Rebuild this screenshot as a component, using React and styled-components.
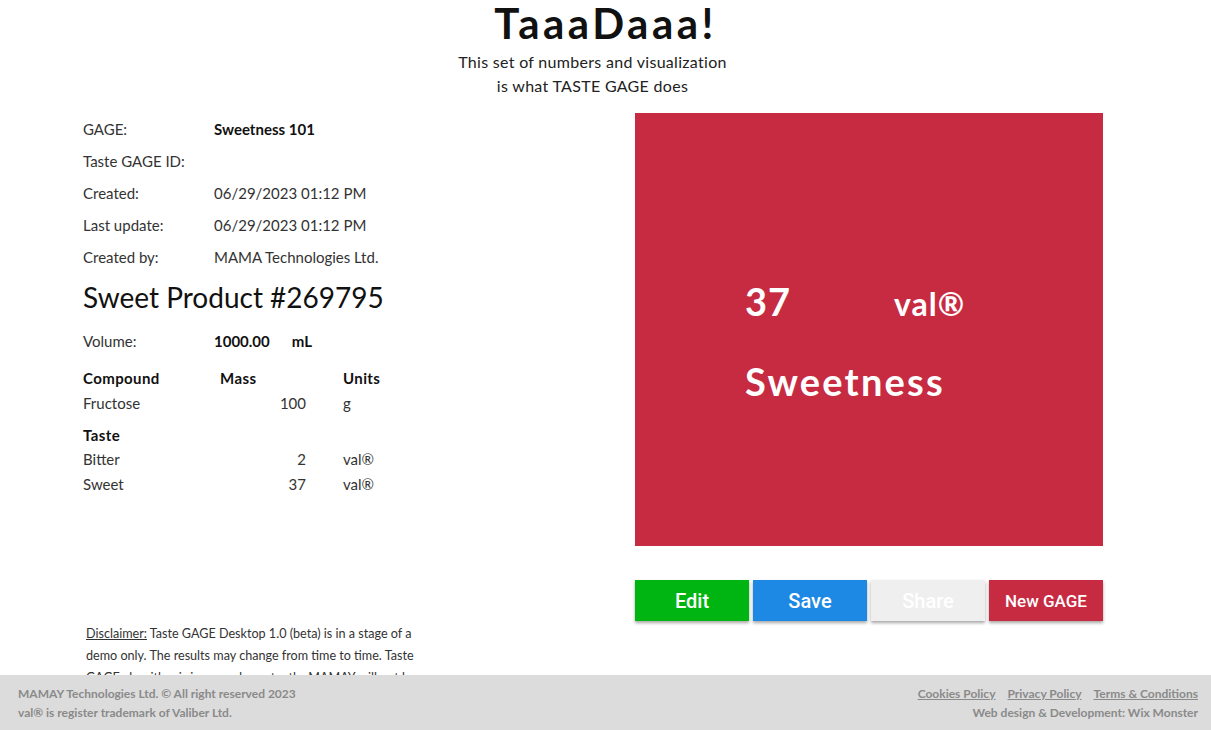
import React from 'react'
import styled, { createGlobalStyle } from 'styled-components'

const GlobalStyle = createGlobalStyle`
  body {
    margin: 0;
    background: #fff;
    font-family: Lato, "Open Sans", sans-serif;
    color: #222;
  }
`

const Page = styled.div`
  width: 1211px;
  height: 730px;
  display: flex;
  flex-direction: column;
`

const Content = styled.div`
  height: 675px;
  overflow: hidden;
`

const Header = styled.header`
  display: flex;
  flex-direction: column;
  align-items: center;
`

const Title = styled.h1`
  margin: 0;
  font-size: 42px;
  line-height: 44px;
  padding-top: 1px;
  font-weight: 700;
  letter-spacing: 3.5px;
  color: #111;
`

const Subtitle = styled.p`
  margin: 5px 26px 0 0;
  font-size: 16px;
  line-height: 24px;
  text-align: center;
  color: #222;
  letter-spacing: 0.3px;
`

const Main = styled.main`
  display: flex;
  padding-top: 15px;
`

const Details = styled.section`
  width: 635px;
  flex-shrink: 0;
  box-sizing: border-box;
  padding-left: 83px;
`

const InfoRow = styled.div`
  display: grid;
  grid-template-columns: 131px 1fr;
  height: 32px;
  align-items: center;
  font-size: 15px;
  color: #333;
`

const Value = styled.span`
  font-weight: ${p => (p.$bold ? 700 : 400)};
  color: ${p => (p.$bold ? '#111' : '#333')};
`

const ProductName = styled.h2`
  margin: 6px 0 10px;
  font-size: 28px;
  line-height: 36px;
  font-weight: 400;
  color: #111;
`

const Unit = styled.span`
  margin-left: 22px;
`

const Table = styled.div`
  display: grid;
  grid-template-columns: 137px 86px 98px;
  margin-top: 8px;
  font-size: 15px;
  color: #333;
`

const Cell = styled.div`
  height: ${p => p.$h || 25}px;
  display: flex;
  align-items: center;
  justify-content: ${p => (p.$right ? 'flex-end' : 'flex-start')};
  padding-left: ${p => (p.$pad ? 37 : 0)}px;
  font-weight: ${p => (p.$head ? 700 : 400)};
  color: ${p => (p.$head ? '#111' : '#333')};
  letter-spacing: ${p => (p.$head ? '0.4px' : '0')};
`

const TasteHead = styled.div`
  grid-column: 1 / -1;
  margin-top: 7px;
  height: 25px;
  display: flex;
  align-items: center;
  font-weight: 700;
  color: #111;
  letter-spacing: 0.4px;
`

const Disclaimer = styled.p`
  margin: 126px 0 0 3px;
  width: 345px;
  font-size: 12.6px;
  line-height: 22px;
  color: #333;
`

const DisclaimerLabel = styled.span`
  text-decoration: underline;
`

const Visual = styled.section`
  width: 468px;
  display: flex;
  flex-direction: column;
`

const Tile = styled.div`
  height: 433px;
  background: #c72b42;
  color: #fff;
  display: flex;
  flex-direction: column;
  justify-content: center;
  padding: 22px 0 0 110px;
  box-sizing: border-box;
  font-weight: 700;
`

const Reading = styled.div`
  display: flex;
  align-items: baseline;
  height: 54px;
`

const Number = styled.span`
  width: 149px;
  font-size: 38px;
  letter-spacing: 1px;
`

const ValUnit = styled.span`
  font-size: 32px;
  letter-spacing: 1px;
`

const TasteName = styled.div`
  margin-top: 26px;
  font-size: 38px;
  letter-spacing: 2.2px;
`

const ButtonBar = styled.div`
  display: flex;
  gap: 4px;
  margin-top: 34px;
`

const Button = styled.button`
  width: 114px;
  height: 41px;
  border: none;
  background: ${p => p.$bg};
  color: #fff;
  font-family: Roboto, sans-serif;
  font-weight: 500;
  font-size: ${p => (p.$small ? 17 : 20)}px;
  box-shadow: 0 2px 3px rgba(0, 0, 0, 0.35);
  padding: 0;
`

const Footer = styled.footer`
  height: 55px;
  background: #dcdcdc;
  display: flex;
  justify-content: space-between;
  align-items: center;
  padding: 0 13px 0 18px;
  font-size: 12px;
  font-weight: 700;
  color: #8a8a8a;
  line-height: 19px;
`

const FooterRight = styled.div`
  text-align: right;
`

const Links = styled.div`
  display: flex;
  justify-content: flex-end;
  gap: 12px;
`

const FooterLink = styled.a`
  color: #8a8a8a;
  text-decoration: underline;
`

const info = [
  ['GAGE:', 'Sweetness 101', true],
  ['Taste GAGE ID:', '', false],
  ['Created:', '06/29/2023 01:12 PM', false],
  ['Last update:', '06/29/2023 01:12 PM', false],
  ['Created by:', 'MAMA Technologies Ltd.', false]
]

const tastes = [
  ['Bitter', '2', 23],
  ['Sweet', '37', 27]
]

const buttons = [
  { label: 'Edit', bg: '#00b512' },
  { label: 'Save', bg: '#1e88e5' },
  { label: 'Share', bg: '#efefef' },
  { label: 'New GAGE', bg: '#c72b42', small: true }
]

const App = () => (
  <Page>
    <GlobalStyle />
    <Content>
      <Header>
        <Title>TaaaDaaa!</Title>
        <Subtitle>
          This set of numbers and visualization
          <br />
          is what TASTE GAGE does
        </Subtitle>
      </Header>
      <Main>
        <Details>
          {info.map(([label, value, bold]) => (
            <InfoRow key={label}>
              <span>{label}</span>
              <Value $bold={bold}>{value}</Value>
            </InfoRow>
          ))}
          <ProductName>Sweet Product #269795</ProductName>
          <InfoRow>
            <span>Volume:</span>
            <Value $bold>
              1000.00<Unit>mL</Unit>
            </Value>
          </InfoRow>
          <Table>
            <Cell $head>Compound</Cell>
            <Cell $head>Mass</Cell>
            <Cell $head $pad>Units</Cell>
            <Cell>Fructose</Cell>
            <Cell $right>100</Cell>
            <Cell $pad>g</Cell>
            <TasteHead>Taste</TasteHead>
            {tastes.map(([name, val, h]) => (
              <React.Fragment key={name}>
                <Cell $h={h}>{name}</Cell>
                <Cell $h={h} $right>{val}</Cell>
                <Cell $h={h} $pad>val®</Cell>
              </React.Fragment>
            ))}
          </Table>
          <Disclaimer>
            <DisclaimerLabel>Disclaimer:</DisclaimerLabel> Taste GAGE Desktop 1.0 (beta) is in a stage of a
            demo only. The results may change from time to time. Taste GAGE algorithm is improved
            constantly. MAMAY will not be responsible for any decision made upon these results.
          </Disclaimer>
        </Details>
        <Visual>
          <Tile>
            <Reading>
              <Number>37</Number>
              <ValUnit>val®</ValUnit>
            </Reading>
            <TasteName>Sweetness</TasteName>
          </Tile>
          <ButtonBar>
            {buttons.map(b => (
              <Button key={b.label} $bg={b.bg} $small={b.small}>
                {b.label}
              </Button>
            ))}
          </ButtonBar>
        </Visual>
      </Main>
    </Content>
    <Footer>
      <div>
        <div>MAMAY Technologies Ltd. © All right reserved 2023</div>
        <div>val® is register trademark of Valiber Ltd.</div>
      </div>
      <FooterRight>
        <Links>
          <FooterLink>Cookies Policy</FooterLink>
          <FooterLink>Privacy Policy</FooterLink>
          <FooterLink>Terms &amp; Conditions</FooterLink>
        </Links>
        <div>Web design &amp; Development: Wix Monster</div>
      </FooterRight>
    </Footer>
  </Page>
)

export default App
